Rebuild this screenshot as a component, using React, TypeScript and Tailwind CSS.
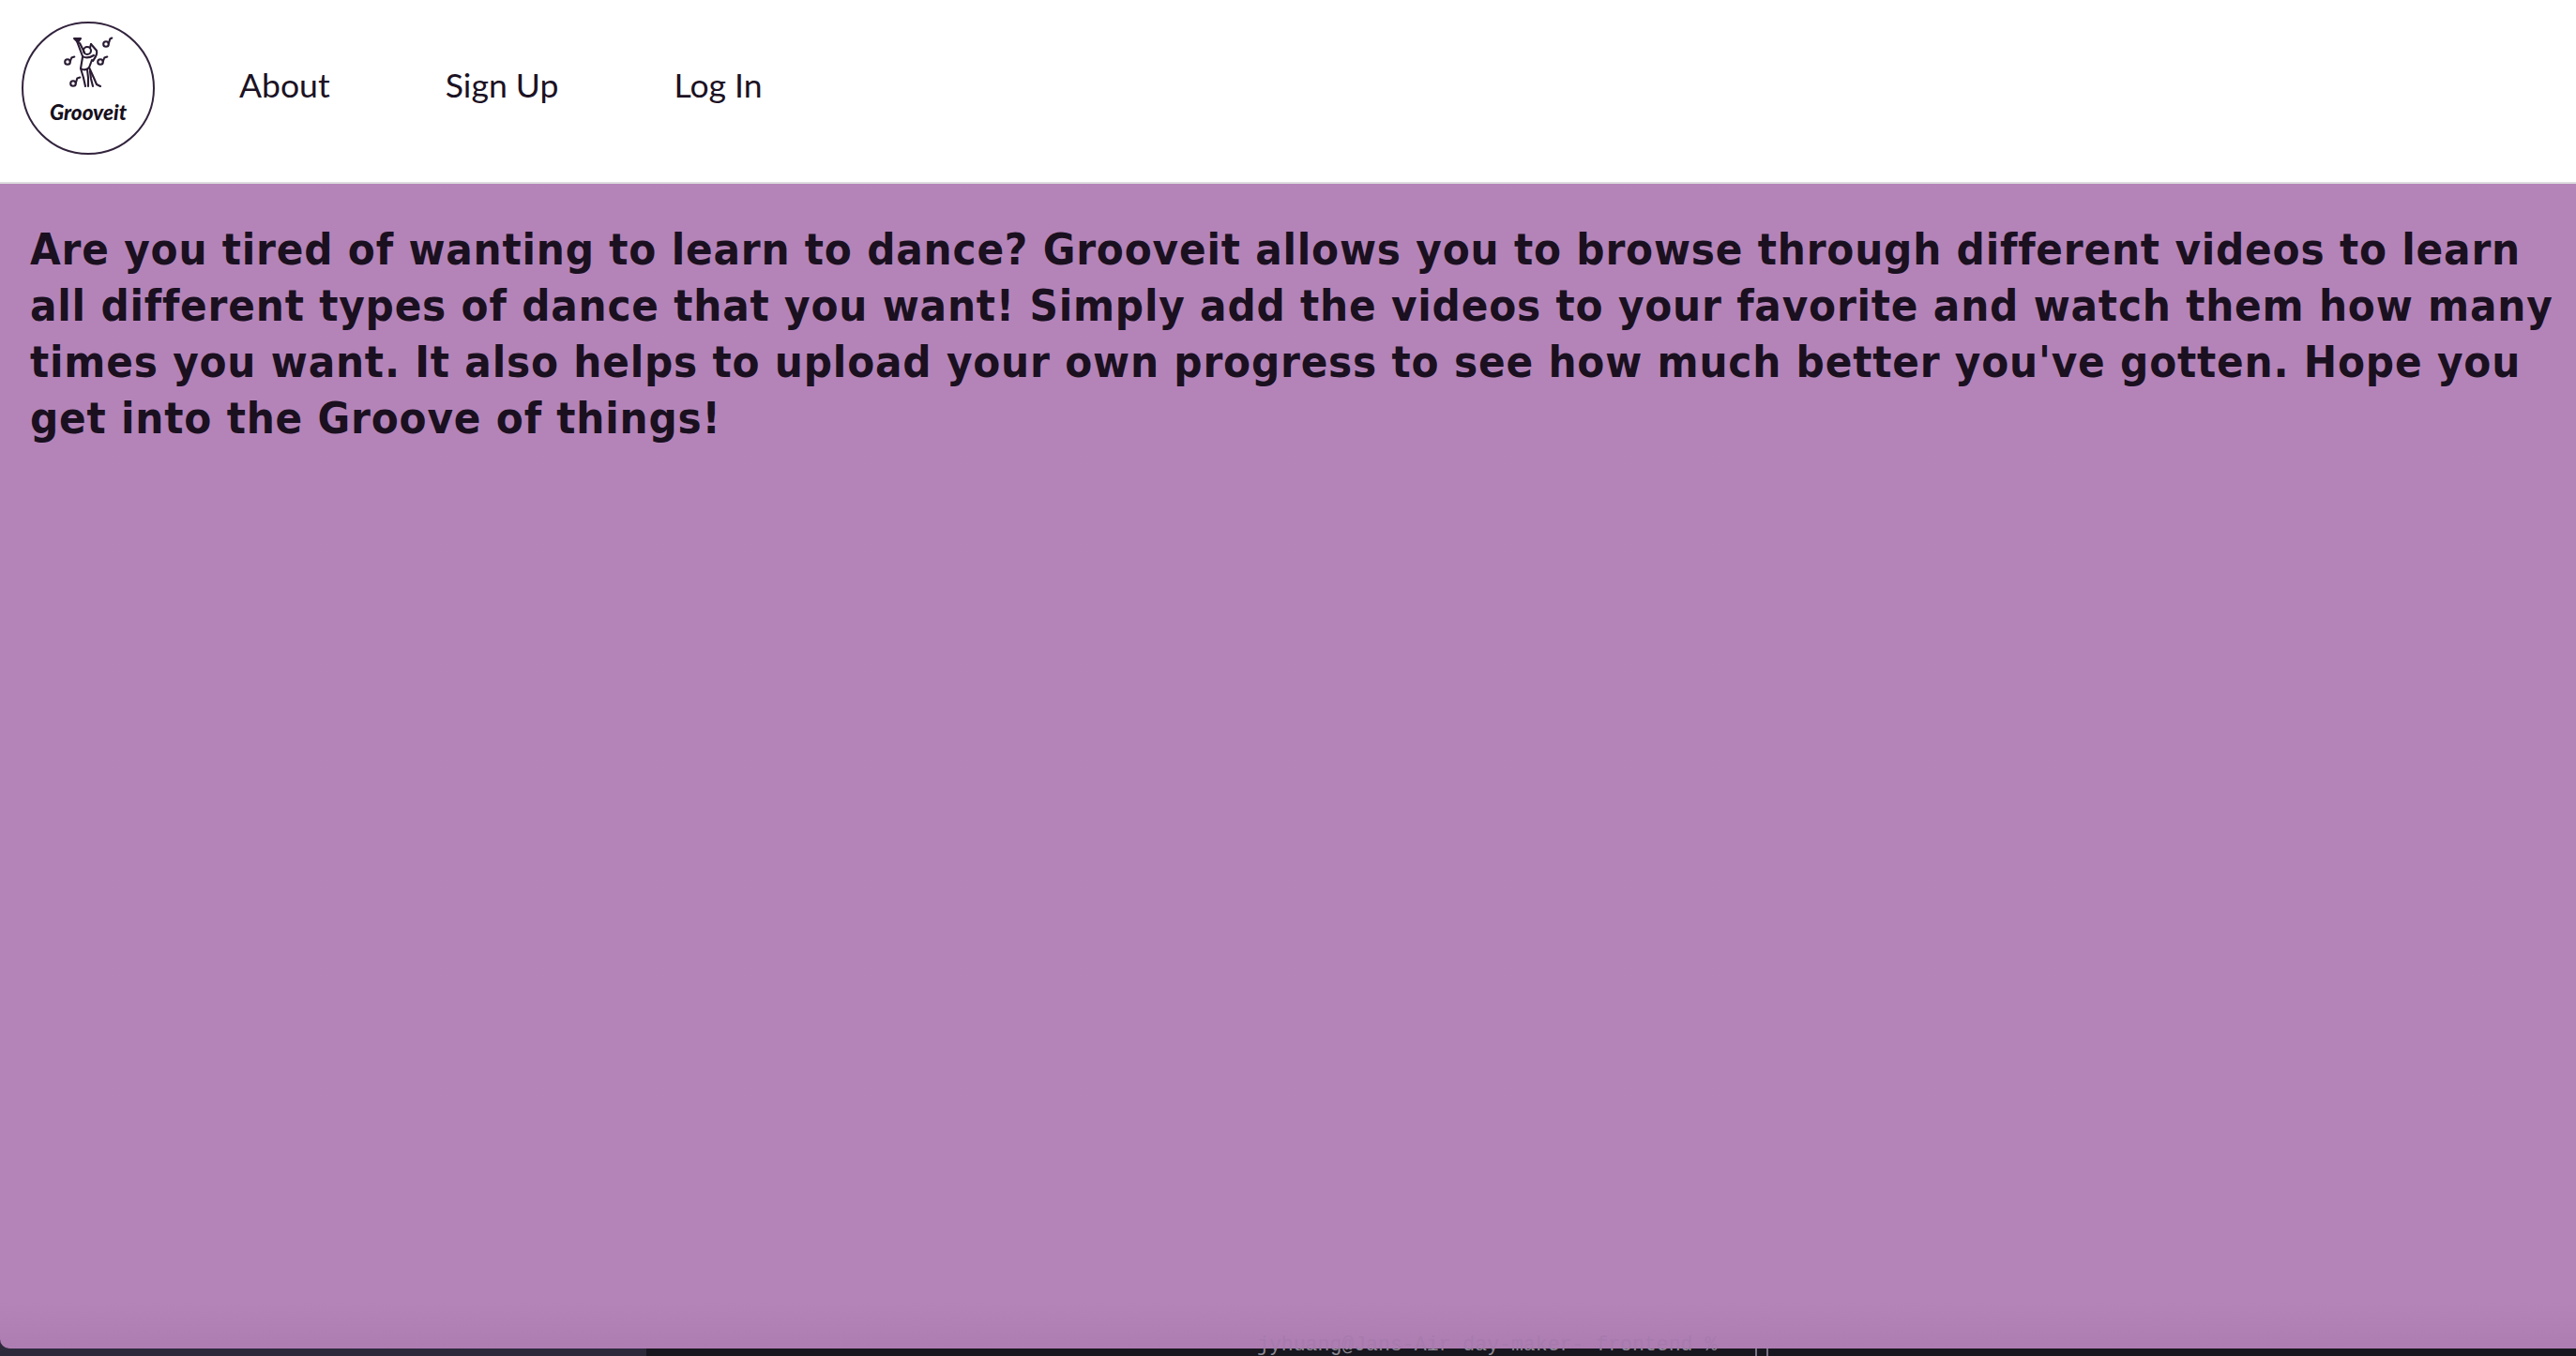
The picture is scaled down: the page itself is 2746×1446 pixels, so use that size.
import React from "react";

const notes = [
  [113, 47, 119, 41],
  [72, 66, 79, 61],
  [107, 66, 114, 61],
  [78, 89, 85, 83],
];

function Logo() {
  return (
    <div className="relative w-[142px] h-[142px] shrink-0 rounded-full border-2 border-[#33243d] bg-white">
      <svg className="absolute left-[-2px] top-[-2px]" width="142" height="142" viewBox="23 23 142 142" fill="none" stroke="#2a1c33" strokeWidth="2.1" strokeLinecap="round" strokeLinejoin="round">
        <path d="M79 41h7l-3 4z" fill="#2a1c33" />
        <path d="M82 44l6 16" />
        <path d="M85 46l5 10" />
        <circle cx="93" cy="54" r="4" />
        <path d="M88 60c3 2 7 2 12-1" />
        <path d="M97 47l6 7c1 3-1 7-4 11" />
        <path d="M97 47l-1 4" />
        <path d="M88 61l-1 6-1 6 3 10 2 9" />
        <path d="M98 64l-3 8 5 11 3 7 4 2" />
        <path d="M86 73c3 2 6 2 9-1" />
        <path d="M93 74l1 9 0 9" />
        <path d="M96 76l1 8 2 8" />
        {notes.map(([x, y, a, b], i) => (
          <g key={i}>
            <circle cx={x} cy={y} r="2.8" />
            <path d={`M${x + 2.8} ${y - 0.5}l1.5 -${y - b - 1} ${a - x - 4} -1`} />
          </g>
        ))}
      </svg>
      <span className="absolute left-0 right-0 top-[82px] text-center font-['Lato',sans-serif] font-black italic text-[22.5px] leading-[26px] text-[#17101d]">Grooveit</span>
    </div>
  );
}

const prompt = "jyhuang@Jans-Air day-maker- frontend %";

export default function App() {
  return (
    <div className="w-[2746px] h-[1446px] flex flex-col overflow-hidden bg-[#18171f]">
      <header className="h-[196px] shrink-0 bg-white border-b-2 border-[#dddddd] flex items-start pl-[23px] pt-[23px] font-['Lato',sans-serif] text-[35.6px] leading-[44px] text-[#1c1224]">
        <Logo />
        <nav className="flex items-center gap-[123px] ml-[90px] mt-[46px]">
          <a>About</a>
          <a>Sign Up</a>
          <a>Log In</a>
        </nav>
      </header>
      <main className="relative z-10 h-[1242px] shrink-0 overflow-hidden rounded-bl-[10px] bg-gradient-to-b from-[#b484b9] from-[96%] to-[#ad7db2] pl-[32px] pr-[16px] pt-[40px]">
        <p className="font-['DejaVu_Sans',sans-serif] font-bold font-stretch-condensed text-[47px] leading-[60px] tracking-[0.8px] text-[#1a1020]">
          Are you tired of wanting to learn to dance? Grooveit allows you to browse through different videos to learn all different types of dance that you want! Simply add the videos to your favorite and watch them how many times you want. It also helps to upload your own progress to see how much better you've gotten. Hope you get into the Groove of things!
        </p>
        <span className="absolute left-[1340px] bottom-[-8px] font-['Liberation_Mono',monospace] text-[21.5px] leading-[24px] text-[#a67bac] whitespace-pre">{prompt}</span>
      </main>
      <footer className="h-[18px] -mt-[10px] shrink-0 flex overflow-hidden">
        <div className="w-[689px] bg-[#2d2a3c]" />
        <div className="flex-1 bg-[#18171f] pl-[651px] flex items-start">
          <span className="block font-['Liberation_Mono',monospace] text-[21.5px] leading-[24px] -mt-[6px] text-[#8f8a96] whitespace-pre">{prompt}</span>
          <span className="block w-[2px] h-full bg-[#7d7288] ml-[41px]" />
          <span className="block w-[2px] h-full bg-[#7d7288] ml-[10px]" />
        </div>
      </footer>
    </div>
  );
}
